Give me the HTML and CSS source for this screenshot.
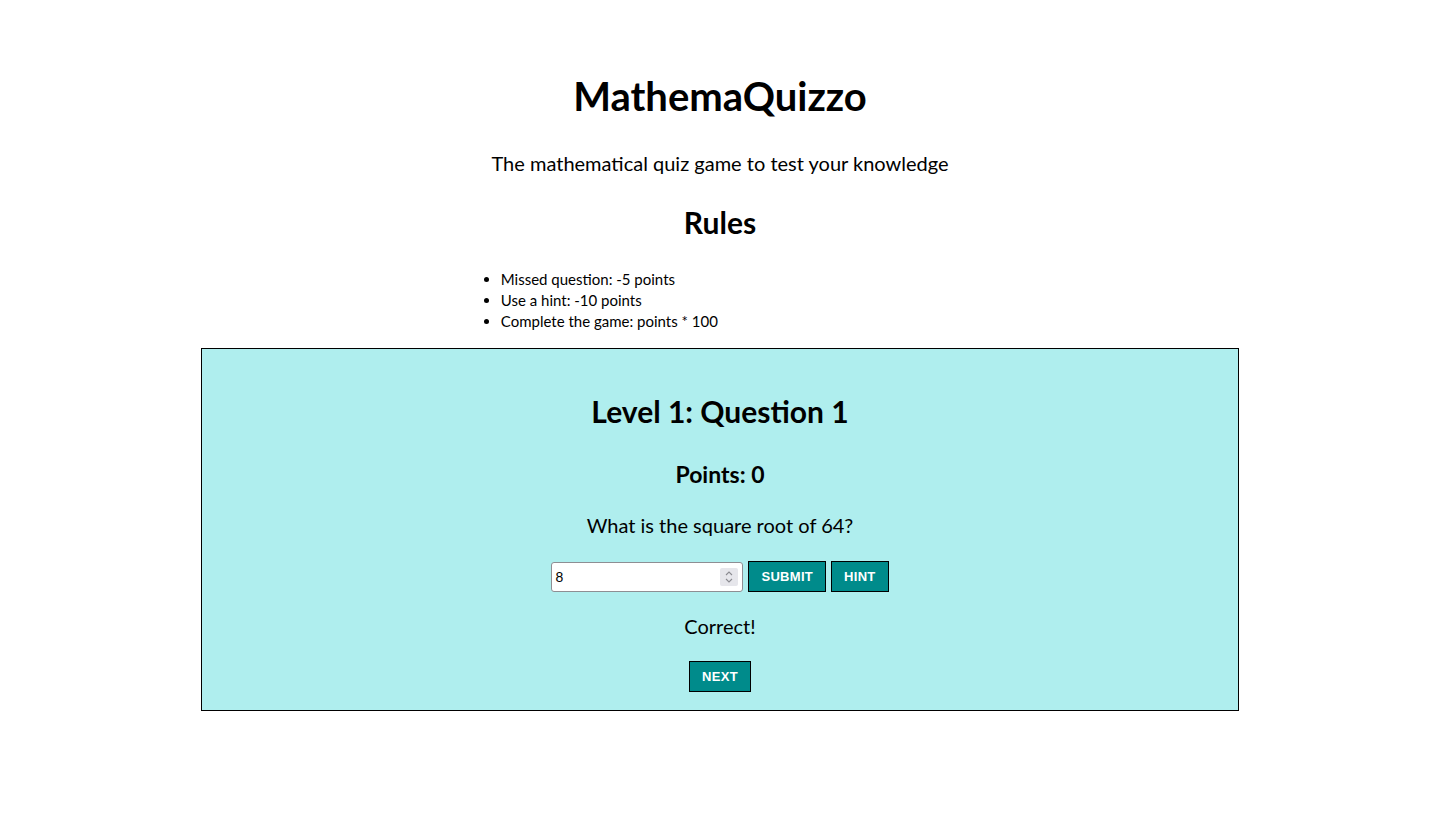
FILE: index.html
```html
<!DOCTYPE html>
<html>
<head>
<meta charset="utf-8">
<title>MathemaQuizzo</title>
<link rel="stylesheet" href="styles.css">
</head>
<body>
<header class="intro">
  <h1 class="title">MathemaQuizzo</h1>
  <p class="tagline">The mathematical quiz game to test your knowledge</p>
  <h2 class="rules-title">Rules</h2>
  <div class="rules">
    <ul class="rules-list">
      <li>Missed question: -5 points</li>
      <li>Use a hint: -10 points</li>
      <li>Complete the game: points * 100</li>
    </ul>
  </div>
</header>
<main class="quiz">
  <h2 class="level">Level 1: Question 1</h2>
  <h3 class="points">Points: 0</h3>
  <p class="question">What is the square root of 64?</p>
  <div class="answer-row">
    <div class="input-wrap">
      <input class="answer" type="text" value="8">
      <span class="spinner">
        <svg width="10" height="16" viewBox="0 0 10 16"><path d="M2 6 L5 3 L8 6" fill="none" stroke="#8a8a90" stroke-width="1.1"/><path d="M2 10 L5 13 L8 10" fill="none" stroke="#8a8a90" stroke-width="1.1"/></svg>
      </span>
    </div>
    <button class="btn">Submit</button>
    <button class="btn">Hint</button>
  </div>
  <p class="feedback">Correct!</p>
  <button class="btn">Next</button>
</main>
</body>
</html>
```
FILE: styles.css
```css
html, body {
  margin: 0;
  padding: 0;
  background: #fff;
}
body {
  font-family: Lato, "Noto Sans", sans-serif;
  color: #000;
  text-align: center;
}
.intro {
  padding-top: 70px;
}
.title {
  font-size: 40px;
  font-weight: 700;
  margin: 0;
  line-height: 52px;
}
.tagline {
  font-size: 20px;
  margin: 29px 0 0;
  line-height: 24px;
}
.rules-title {
  font-size: 30px;
  font-weight: 700;
  margin: 29px 0 0;
  line-height: 36px;
}
.rules {
  width: 36%;
  margin: 0 auto;
  text-align: left;
}
.rules-list {
  margin: 29px 0 0;
  padding-left: 40px;
  font-size: 15px;
  line-height: 21px;
}
.quiz {
  width: 72%;
  margin: 16px auto 0;
  background: #afeeee;
  border: 1px solid #000;
  padding: 39px 0 18px;
}
.level {
  font-size: 30px;
  font-weight: 700;
  margin: 0;
  line-height: 46px;
}
.points {
  font-size: 23px;
  font-weight: 700;
  margin: 25px 0 0;
  line-height: 30px;
}
.question {
  font-size: 20px;
  margin: 23px 0 0;
  line-height: 26px;
}
.answer-row {
  display: flex;
  justify-content: center;
  align-items: center;
  gap: 5px;
  margin-top: 23px;
}
.input-wrap {
  position: relative;
  display: flex;
}
.answer {
  width: 192px;
  height: 30px;
  box-sizing: border-box;
  border: 1px solid #8e8e93;
  border-radius: 3px;
  background: #fff;
  font-family: "Liberation Sans", Arial, sans-serif;
  font-size: 14px;
  padding: 0 3px;
  color: #000;
}
.spinner {
  position: absolute;
  right: 5px;
  top: 6px;
  width: 18px;
  height: 18px;
  background: #e6e6eb;
  border-radius: 2px;
  display: flex;
  align-items: center;
  justify-content: center;
}
.btn {
  background: #008b8b;
  color: #fff;
  border: 1px solid #000;
  font-family: "Liberation Sans", Arial, sans-serif;
  font-weight: 700;
  font-size: 13px;
  text-transform: uppercase;
  letter-spacing: 0.3px;
  height: 31px;
  padding: 0 12px;
  border-radius: 0;
  cursor: pointer;
}
.feedback {
  font-size: 20px;
  margin: 21px 0 22px;
  line-height: 26px;
}
```
